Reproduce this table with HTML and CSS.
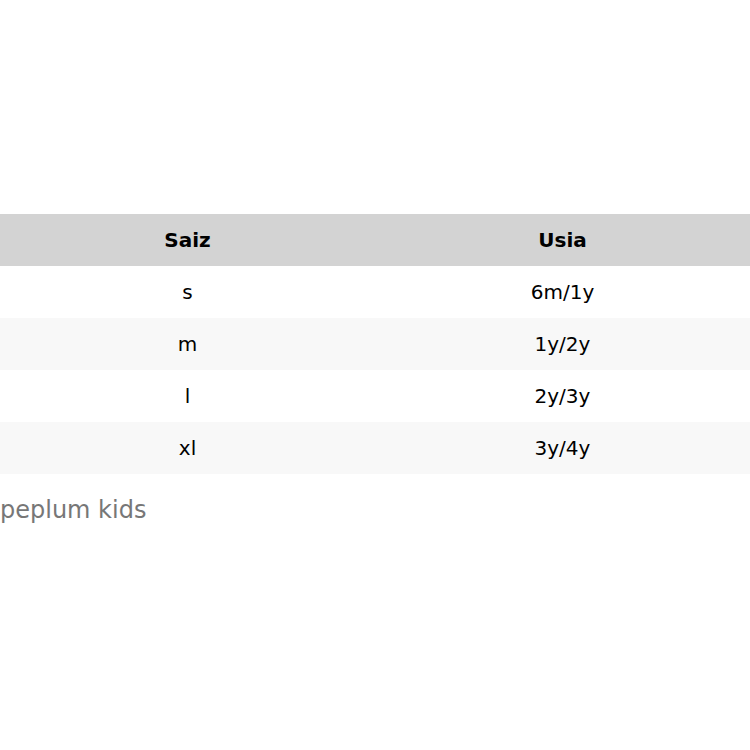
FILE: index.html
```html
<!DOCTYPE html>
<html>
<head>
<meta charset="utf-8">
<link rel="stylesheet" href="styles.css">
</head>
<body>
<main class="page">
<table class="size-table">
<caption class="caption">peplum kids</caption>
<thead>
<tr><th>Saiz</th><th>Usia</th></tr>
</thead>
<tbody>
<tr><td>s</td><td>6m/1y</td></tr>
<tr><td>m</td><td>1y/2y</td></tr>
<tr><td>l</td><td>2y/3y</td></tr>
<tr><td>xl</td><td>3y/4y</td></tr>
</tbody>
</table>
</main>
</body>
</html>
```
FILE: styles.css
```css
html, body {
  margin: 0;
  padding: 0;
  background: #fff;
}
body {
  font-family: "DejaVu Sans", sans-serif;
  color: #000;
}
.page {
  padding-top: 214px;
}
.size-table {
  width: 100%;
  border-collapse: collapse;
  font-size: 20px;
}
.size-table th,
.size-table td {
  width: 50%;
  height: 52px;
  padding: 0;
  text-align: center;
  vertical-align: middle;
}
.size-table th {
  background: #d3d3d3;
  font-weight: bold;
}
.size-table tbody tr:nth-child(even) {
  background: #f8f8f8;
}
.caption {
  caption-side: bottom;
  text-align: left;
  font-size: 24px;
  color: #777;
  padding-top: 22px;
}
```
